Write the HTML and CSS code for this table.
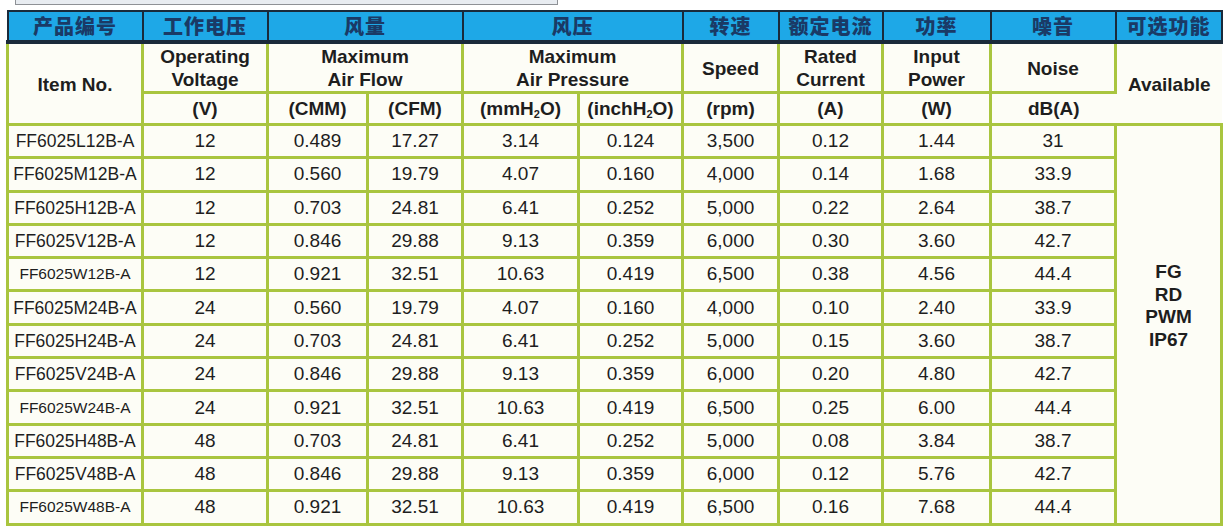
FILE: index.html
```html
<!DOCTYPE html>
<html lang="zh-CN">
<head>
    <meta charset="UTF-8">
    <title>FF6025 Fan Specifications</title>
    <link rel="stylesheet" href="styles.css">
</head>
<body>
    <div class="top-box"></div>
    <table class="spec">
        <colgroup>
            <col class="c-item">
            <col class="c-volt">
            <col class="c-cmm">
            <col class="c-cfm">
            <col class="c-mm">
            <col class="c-inch">
            <col class="c-rpm">
            <col class="c-amp">
            <col class="c-watt">
            <col class="c-noise">
            <col class="c-opt">
        </colgroup>
        <thead>
            <tr class="cn">
                <th>产品编号</th>
                <th>工作电压</th>
                <th colspan="2">风量</th>
                <th colspan="2">风压</th>
                <th>转速</th>
                <th>额定电流</th>
                <th>功率</th>
                <th>噪音</th>
                <th>可选功能</th>
            </tr>
            <tr class="en">
                <th rowspan="2">Item No.</th>
                <th>Operating<br>Voltage</th>
                <th colspan="2">Maximum<br>Air Flow</th>
                <th colspan="2">Maximum<br>Air Pressure</th>
                <th>Speed</th>
                <th>Rated<br>Current</th>
                <th>Input<br>Power</th>
                <th class="noise">Noise</th>
                <th rowspan="2" class="avail">Available</th>
            </tr>
            <tr class="unit">
                <th>(V)</th>
                <th>(CMM)</th>
                <th>(CFM)</th>
                <th>(mmH<sub>2</sub>O)</th>
                <th>(inchH<sub>2</sub>O)</th>
                <th>(rpm)</th>
                <th>(A)</th>
                <th>(W)</th>
                <th class="db">dB(A)</th>
            </tr>
        </thead>
        <tbody>
            <tr>
                <td class="item">FF6025L12B-A</td><td>12</td><td>0.489</td><td>17.27</td><td>3.14</td><td>0.124</td><td>3,500</td><td>0.12</td><td>1.44</td><td>31</td>
                <td rowspan="12" class="options">FG<br>RD<br>PWM<br>IP67</td>
            </tr>
            <tr>
                <td class="item">FF6025M12B-A</td><td>12</td><td>0.560</td><td>19.79</td><td>4.07</td><td>0.160</td><td>4,000</td><td>0.14</td><td>1.68</td><td>33.9</td>
            </tr>
            <tr>
                <td class="item">FF6025H12B-A</td><td>12</td><td>0.703</td><td>24.81</td><td>6.41</td><td>0.252</td><td>5,000</td><td>0.22</td><td>2.64</td><td>38.7</td>
            </tr>
            <tr>
                <td class="item">FF6025V12B-A</td><td>12</td><td>0.846</td><td>29.88</td><td>9.13</td><td>0.359</td><td>6,000</td><td>0.30</td><td>3.60</td><td>42.7</td>
            </tr>
            <tr>
                <td class="item small">FF6025W12B-A</td><td>12</td><td>0.921</td><td>32.51</td><td>10.63</td><td>0.419</td><td>6,500</td><td>0.38</td><td>4.56</td><td>44.4</td>
            </tr>
            <tr>
                <td class="item">FF6025M24B-A</td><td>24</td><td>0.560</td><td>19.79</td><td>4.07</td><td>0.160</td><td>4,000</td><td>0.10</td><td>2.40</td><td>33.9</td>
            </tr>
            <tr>
                <td class="item">FF6025H24B-A</td><td>24</td><td>0.703</td><td>24.81</td><td>6.41</td><td>0.252</td><td>5,000</td><td>0.15</td><td>3.60</td><td>38.7</td>
            </tr>
            <tr>
                <td class="item">FF6025V24B-A</td><td>24</td><td>0.846</td><td>29.88</td><td>9.13</td><td>0.359</td><td>6,000</td><td>0.20</td><td>4.80</td><td>42.7</td>
            </tr>
            <tr>
                <td class="item small">FF6025W24B-A</td><td>24</td><td>0.921</td><td>32.51</td><td>10.63</td><td>0.419</td><td>6,500</td><td>0.25</td><td>6.00</td><td>44.4</td>
            </tr>
            <tr>
                <td class="item">FF6025H48B-A</td><td>48</td><td>0.703</td><td>24.81</td><td>6.41</td><td>0.252</td><td>5,000</td><td>0.08</td><td>3.84</td><td>38.7</td>
            </tr>
            <tr>
                <td class="item">FF6025V48B-A</td><td>48</td><td>0.846</td><td>29.88</td><td>9.13</td><td>0.359</td><td>6,000</td><td>0.12</td><td>5.76</td><td>42.7</td>
            </tr>
            <tr>
                <td class="item small">FF6025W48B-A</td><td>48</td><td>0.921</td><td>32.51</td><td>10.63</td><td>0.419</td><td>6,500</td><td>0.16</td><td>7.68</td><td>44.4</td>
            </tr>
        </tbody>
    </table>
</body>
</html>
```

FILE: styles.css
```css
body {
    margin: 0;
    background-color: #fff;
    font-family: "Liberation Sans", Arial, sans-serif;
    color: #1e1e1e;
}

/* bottom of a cut-off text box above the table */
.top-box {
    margin-left: 15px;
    width: 541px;
    height: 4px;
    border: 1px solid #8e9196;
    border-top: none;
    background-color: #e8ecf1;
}

.spec {
    margin: 5px 0 0 6px;
    border-collapse: collapse;
    table-layout: fixed;
    width: 1214px;
}

.c-item { width: 135px; }
.c-volt { width: 125px; }
.c-cmm { width: 100px; }
.c-cfm { width: 95px; }
.c-mm { width: 116px; }
.c-inch { width: 104px; }
.c-rpm { width: 96px; }
.c-amp { width: 104px; }
.c-watt { width: 108px; }
.c-noise { width: 125px; }
.c-opt { width: 106px; }

.spec th,
.spec td {
    border: 3px solid #a9c53f;
    padding: 0;
    text-align: center;
    vertical-align: middle;
    background-color: #fdfdf6;
    white-space: nowrap;
}

/* Chinese title row */
.spec .cn th {
    height: 28px;
    background-color: #1ea8e7;
    color: #1a3a66;
    border: 2px solid #1a2a3a;
    border-bottom-width: 4px;
    font-family: "Noto Sans CJK SC", sans-serif;
    font-weight: 900;
    font-size: 20px;
    line-height: 24px;
    letter-spacing: 1px;
}

.spec .en th {
    height: 46px;
    font-size: 19px;
    line-height: 23px;
    font-weight: bold;
    padding-top: 1px;
}

.spec .unit th {
    height: 29px;
    font-size: 19px;
    font-weight: bold;
}

.spec sub {
    font-size: 11px;
    vertical-align: -3px;
    line-height: 0;
}

.spec .noise {
    border-right: 3px solid #a9c53f;
}

.spec .avail {
    border-left: none;
    border-right: none;
    padding-top: 2px;
}

.spec .db {
    border-right: none;
}

.spec td {
    height: 30.3px;
    font-size: 19px;
    line-height: 22px;
}

.spec td.item {
    font-size: 17.5px;
}

.spec td.item.small {
    font-size: 15.5px;
}

.spec td.options {
    font-weight: bold;
    font-size: 19px;
    line-height: 22.5px;
    padding-bottom: 36px;
}
```
